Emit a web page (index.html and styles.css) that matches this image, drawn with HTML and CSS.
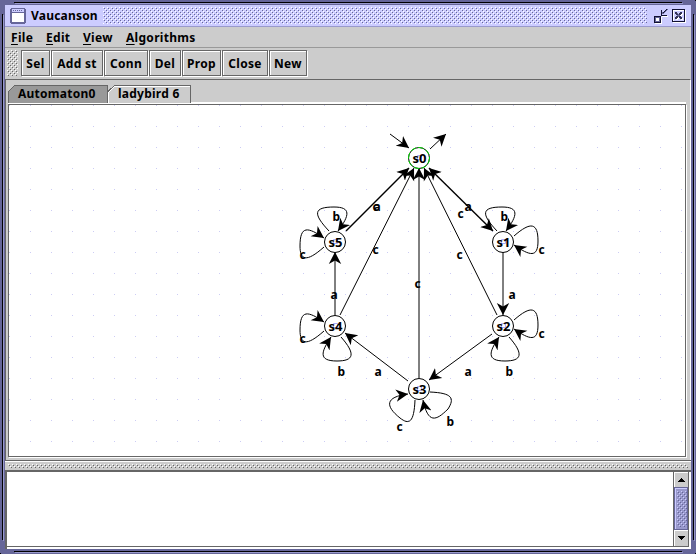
FILE: index.html
```
<!DOCTYPE html>
<html lang="en">
<head>
<meta charset="utf-8">
<title>Vaucanson</title>
<link rel="stylesheet" href="styles.css">
</head>
<body>
<div class="window">
  <svg class="bevel" width="696" height="554" shape-rendering="crispEdges" fill="none">
    <path stroke="#000" d="M14 2.5H682M2.5 14V540M14 551.5H682M693.5 14V540"/>
    <path stroke="#9999cc" d="M15 3.5H683M3.5 15V541M15 552.5H683M694.5 15V541"/>
    <path stroke="#000" d="M0 553.5H1M695 553.5H696M695 .5H696"/>
  </svg>
  <header class="titlebar">
    <svg class="app-icon" width="16" height="16" shape-rendering="crispEdges">
      <path fill="#666699" d="M1 0H15V1H16V15H15V16H1V15H0V1H1z"/>
      <path fill="#ccccff" d="M2 1H14V4H2z"/><path fill="#fff" d="M2 5H14V14H2z"/>
      <path fill="#666699" d="M3 2h1v1h-1zM5 2h1v1h-1zM7 2h1v1h-1zM9 2h1v1h-1zM11 2h1v1h-1z"/>
    </svg>
    <h1 class="title">Vaucanson</h1>
    <svg class="grip" shape-rendering="crispEdges">
      <defs><pattern id="bumps" width="4" height="4" patternUnits="userSpaceOnUse">
        <path fill="#fff" d="M0 0h1v1h-1zM2 2h1v1h-1z"/><path fill="#666699" d="M1 1h1v1h-1zM3 3h1v1h-1z"/>
      </pattern></defs>
      <rect width="100%" height="100%" fill="url(#bumps)"/>
    </svg>
    <svg class="win-btn" width="15" height="15" shape-rendering="crispEdges">
      <path fill="#fff" d="M1 8h7v7h-7zM8 7h6v1h-6z"/>
      <path fill="#111133" d="M0 7h7v7h-7zM7 1h1v5h5v1h-6z"/>
      <path fill="#666699" d="M1 8h5v5h-5zM8 5V3h1v1h1V3h1V2h1V1h1V0h1v1h-1v1h-1v1h-1v1h-1v1z"/>
      <path fill="#111133" d="M9 3h1v-1h1v-1h1v-1h1v1h-1v1h-1v1h-1v1h-1z"/>
      <path fill="#fff" d="M2 9h3v3h-3z"/>
    </svg>
    <svg class="win-btn" width="15" height="15" shape-rendering="crispEdges">
      <path fill="none" stroke="#fff" d="M1.500 1.500h12v12h-12z"/>
      <path fill="none" stroke="#111133" d="M.5.5h12v12h-12z"/>
      <path fill="#fff" d="M4 4h2v1h1v1h1V5h1V4h2v2h-1v1h-1v1h1v1h1v2h-2v-1H8V9H7v1H6v1H4V9h1V8h1V7H5V6H4z"/>
      <path fill="#333355" d="M3 3h2v1h1v1h1V4h1V3h2v2h-1v1h-1v1h1v1h1v2h-2v-1H7V8H6v1H5v1H3V8h1V7h1V6H4V5H3z"/>
      <path fill="#666699" d="M5 4h1v1h1v1h1v1H7v1H6V7H5V6h1V5H5z"/>
    </svg>
  </header>
  <nav class="menubar"><span class="m-file"><u>F</u>ile</span><span class="m-edit"><u>E</u>dit</span><span class="m-view"><u>V</u>iew</span><span><u>A</u>lgorithms</span></nav>
  <div class="toolbar">
    <svg class="handle" shape-rendering="crispEdges">
      <defs><pattern id="gray-bumps" width="4" height="4" patternUnits="userSpaceOnUse">
        <path fill="#fff" d="M0 0h1v1h-1zM2 2h1v1h-1z"/><path fill="#666" d="M1 1h1v1h-1zM3 3h1v1h-1z"/>
      </pattern></defs>
      <rect width="100%" height="100%" fill="url(#gray-bumps)"/>
    </svg>
    <button class="b-sel">Sel</button><button class="b-add">Add st</button><button class="b-conn">Conn</button><button class="b-del">Del</button><button class="b-prop">Prop</button><button class="b-close">Close</button><button class="b-new">New</button>
  </div>
  <main class="workspace">
    <div class="tabs">
      <div class="tab tab-first"><svg width="100" height="18" shape-rendering="crispEdges"><path fill="#999" stroke="#666" d="M.5 18V6.500L6.500.5H99.500V18"/></svg><span>Automaton0</span></div>
      <div class="tab tab-active"><svg width="83" height="18" shape-rendering="crispEdges"><path fill="#ccc" d="M0 18V6L6 0H83V18"/><path fill="none" stroke="#666" d="M0 6.500L6.500.5H82.500V18"/><path fill="none" stroke="#fff" d="M.5 18V7.500L6.500 1.500H82"/></svg><span>ladybird 6</span></div>
    </div>
    <div class="pane">
      <svg class="graph" width="676" height="351" viewBox="9 105 676 351">
        <defs>
          <pattern id="grid" x="9" y="105" width="21" height="21" patternUnits="userSpaceOnUse"><rect width="1" height="1" fill="#ccccf4"/></pattern>
          <marker id="arrow" markerUnits="userSpaceOnUse" markerWidth="13" markerHeight="14" refX="12" refY="7" orient="auto-start-reverse"><path d="M12 7L0 .8L3.500 7L0 13.200z"/></marker>
        </defs>
        <rect x="9" y="105" width="676" height="351" fill="url(#grid)"/>
        <g class="edges">
          <path d="M390 134L409 148"/><path d="M430 149L446 134"/>
          <path class="double" marker-start="url(#arrow)" d="M429 168L493 231"/>
          <path class="double" d="M346 231L409 168"/>
          <path d="M340 315L414 168"/><path d="M497 315L424 168"/><path d="M419 378V168"/>
          <path d="M503 252V315"/><path d="M492 334L429 380"/><path d="M408 381L345 333"/><path d="M335 315V252"/>
          <path d="M329 231C313 214 313 207 334 207C351 207 350 215 338 231"/>
          <path d="M497 231C481 214 481 207 502 207C519 207 518 215 506 231"/>
          <path d="M324 247C306 263 300 260 300 246C300 225 308 227 324 238"/>
          <path d="M324 331C306 347 300 344 300 330C300 309 308 311 324 322"/>
          <path d="M514 236C531 221 538 223 538 241C538 258 530 256 514 245"/>
          <path d="M514 320C531 305 538 307 538 325C538 342 530 340 514 329"/>
          <path d="M341 337C356 354 354 361 337 361C318 361 321 352 331 337"/>
          <path d="M509 337C524 354 522 361 505 361C486 361 489 352 499 337"/>
          <path d="M415 400C414 423 409 425 400 418C385 406 385 397 408 394"/>
          <path d="M430 392C452 393 455 398 448 409C436 421 428 424 423 400"/>
        </g>
        <g class="nodes">
          <circle cx="419" cy="158" r="10.500"/><circle class="current" cx="419" cy="158" r="10.500"/>
          <circle cx="335" cy="242" r="10.500"/><circle cx="503" cy="242" r="10.500"/>
          <circle cx="335" cy="326" r="10.500"/><circle cx="503" cy="326" r="10.500"/><circle cx="419" cy="389" r="10.500"/>
        </g>
        <g class="anchors">
          <path d="M417.500 155.500h4v4h-4zM333.500 239.500h4v4h-4zM501.500 239.500h4v4h-4zM333.500 323.500h4v4h-4zM501.500 323.500h4v4h-4zM417.500 386.500h4v4h-4z"/>
        </g>
        <g class="names">
          <text x="412.500" y="163">s0</text><text x="328.500" y="247">s5</text><text x="496.500" y="247">s1</text>
          <text x="328.500" y="331">s4</text><text x="496.500" y="331">s2</text><text x="412.500" y="394">s3</text>
        </g>
        <g class="labels">
          <text x="332.500" y="221">b</text><text x="500.500" y="221">b</text><text x="299.500" y="259">c</text><text x="299.500" y="343">c</text>
          <text x="538.500" y="254">c</text><text x="538.500" y="338">c</text><text x="337.500" y="376">b</text><text x="505.500" y="376">b</text>
          <text x="396.500" y="431">c</text><text x="446.500" y="426">b</text>
          <text x="373.500" y="211">a</text><text x="372.500" y="211">c</text><text x="464.500" y="211">a</text><text x="457.500" y="218">c</text>
          <text x="372.500" y="254">c</text><text x="456.500" y="259">c</text><text x="414.500" y="288">c</text>
          <text x="330.500" y="299">a</text><text x="508.500" y="299">a</text><text x="374.500" y="376">a</text><text x="464.500" y="376">a</text>
        </g>
      </svg>
    </div>
  </main>
  <div class="divider"><svg shape-rendering="crispEdges"><rect width="100%" height="100%" fill="url(#gray-bumps)"/></svg></div>
  <section class="console">
    <div class="output"></div>
    <div class="scrollbar">
      <div class="arrow-btn"><svg width="9" height="5" shape-rendering="crispEdges"><path d="M4 0h1v1h1v1h1v1h1v1H1V3h1V2h1V1h1z"/></svg></div>
      <div class="thumb"><svg shape-rendering="crispEdges"><defs><pattern id="thumb-bumps" width="4" height="4" patternUnits="userSpaceOnUse"><path fill="#ccccff" d="M0 0h1v1h-1zM2 2h1v1h-1z"/><path fill="#666699" d="M1 1h1v1h-1zM3 3h1v1h-1z"/></pattern></defs><rect width="100%" height="100%" fill="url(#thumb-bumps)"/></svg></div>
      <div class="arrow-btn arrow-down"><svg width="9" height="5" shape-rendering="crispEdges"><path d="M1 0h7v1h-1v1h-1v1h-1v1h-1v-1h-1v-1h-1v-1h-1z"/></svg></div>
    </div>
  </section>
</div>
</body>
</html>
```
FILE: styles.css
```
* { box-sizing: border-box; }
body { margin: 0; font: bold 12px/16px "Noto Sans", sans-serif; color: #000; }
svg { display: block; flex: none; }
.window { position: relative; width: 696px; height: 554px; padding: 5px; background: #666699; display: flex; flex-direction: column; }
.bevel { position: absolute; inset: 0; pointer-events: none; }
.titlebar { height: 22px; flex: none; background: #ccccff; border-bottom: 1px solid #9999cc; display: flex; align-items: center; padding: 0 0 0 5px; }
.title { font-size: 12px; line-height: 16px; margin: 0 0 0 5px; width: 72px; padding-top: 1px; letter-spacing: .2px; }
.grip { width: 544px; height: 17px; margin-right: 7px; }
.win-btn { margin-top: 2px; }
.win-btn + .win-btn { margin-left: 3px; }
.menubar { height: 21px; flex: none; background: #ccc; border-bottom: 1px solid #999; padding: 3px 6px 0; display: flex; letter-spacing: .3px; }
.menubar u { text-underline-offset: 2px; text-decoration-thickness: 1px; }
.m-file { width: 35px; } .m-edit { width: 37px; } .m-view { width: 43px; }
.toolbar { height: 31px; flex: none; background: #ccc; padding: 2px 2px 0; display: flex; }
.handle { width: 11px; height: 26px; margin-right: 3px; }
.toolbar button { height: 26px; margin: 0 1px 0 0; padding: 2px 0 0; border: 1px solid #666; background: #ccc; box-shadow: inset 1px 1px #fff, 1px 1px #fff; font: inherit; letter-spacing: .3px; }
.b-sel { width: 29px; } .b-add { width: 52px; } .b-conn { width: 44px; } .b-del { width: 32px; }
.b-prop { width: 39px; } .b-close { width: 46px; } .b-new { width: 38px; }
.workspace { height: 381px; flex: none; background: #ccc; border-top: 1px solid #666; border-left: 1px solid #666; border-right: 1px solid #fff; padding: 5px 2px 0 2px; }
.tabs { display: flex; height: 17px; }
.tab { position: relative; }
.tab span { position: absolute; left: 10px; top: 1px; white-space: nowrap; letter-spacing: .25px; }
.tab-first { width: 100px; }
.pane { border: 1px solid #666; background: #fff; margin-top: 2px; width: 678px; height: 353px; box-shadow: 0 -2px #fff, 1px 1px #fff; }
.edges path { fill: none; stroke: #000; marker-end: url(#arrow); }
.edges .double { stroke-width: 1.4; }
.nodes circle { fill: #fff; stroke: #000; }
.nodes .current { stroke: #00e000; stroke-dasharray: 6 2; fill: none; }
.anchors path { fill: none; stroke: #aaaaff; stroke-width: 1; }
.names text { font-size: 13px; }
.divider { height: 12px; flex: none; background: #ccc; border-top: 1px solid #666; border-bottom: 2px solid #666; box-shadow: inset 0 1px #fff; padding: 3px 3px 0; }
.divider svg { width: 680px; height: 4px; }
.console { height: 77px; flex: none; background: #fff; border-left: 2px solid #666; display: flex; padding-bottom: 2px; }
.output { width: 666px; border-bottom: 1px solid #666; }
.scrollbar { width: 16px; border: 1px solid #666; border-top: 0; background: #ccc; display: flex; flex-direction: column; }
.arrow-btn { height: 15px; background: #ccc; border-top: 1px solid #fff; border-left: 1px solid #fff; display: grid; place-items: center; }
.arrow-down { height: 16px; }
.thumb { height: 43px; background: #9999cc; border: 1px solid #666699; box-shadow: inset 1px 1px #ccccff; padding: 3px 2px; }
.thumb svg { width: 10px; height: 36px; }
```
